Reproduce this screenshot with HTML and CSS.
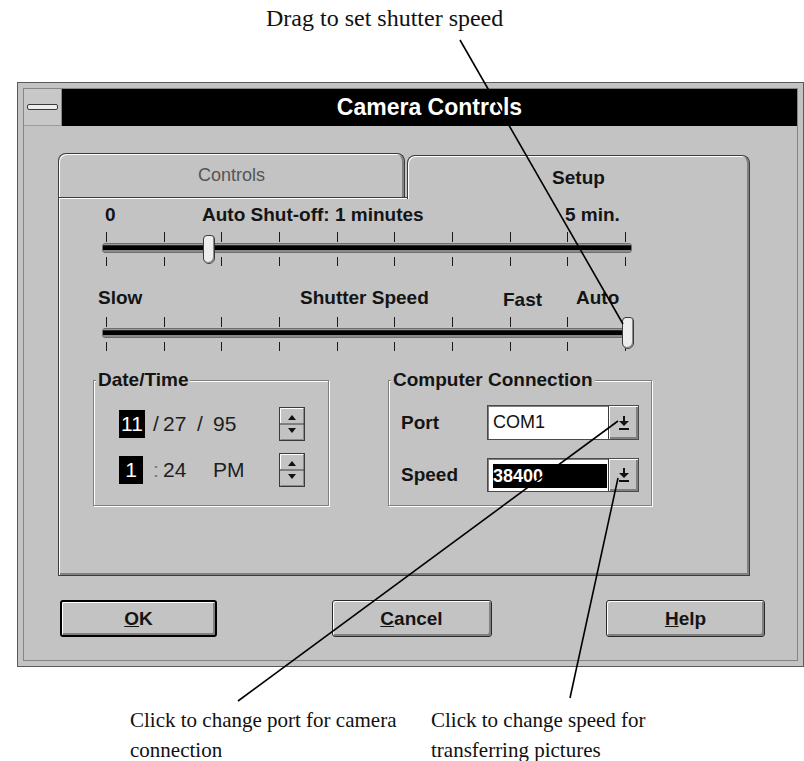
FILE: index.html
```html
<!DOCTYPE html>
<html>
<head>
<meta charset="utf-8">
<title>Camera Controls</title>
<link rel="stylesheet" href="styles.css">
</head>
<body>
<div class="page">
  <p class="caption caption-top">Drag to set shutter speed</p>

  <div class="window">
    <div class="frame">
      <div class="titlebar">
        <div class="sysmenu"><span class="sysbar"></span></div>
        <div class="title">Camera Controls</div>
      </div>
      <div class="client">
        <div class="tabs">
          <div class="tab tab-controls">Controls</div>
          <div class="tab tab-setup">Setup</div>
        </div>
        <div class="panel">
          <div class="labels row1">
            <span>0</span><span>Auto Shut-off: 1 minutes</span><span>5 min.</span>
          </div>
          <div class="slider s1">
            <div class="ticks"><i></i><i></i><i></i><i></i><i></i><i></i><i></i><i></i><i></i><i></i></div>
            <div class="track"></div>
            <div class="ticks bottom"><i></i><i></i><i></i><i></i><i></i><i></i><i></i><i></i><i></i><i></i></div>
            <div class="thumb" style="left:103px"></div>
          </div>

          <div class="labels row2">
            <span>Slow</span><span>Shutter Speed</span><span class="fast">Fast</span><span>Auto</span>
          </div>
          <div class="slider s2">
            <div class="ticks"><i></i><i></i><i></i><i></i><i></i><i></i><i></i><i></i><i></i><i></i></div>
            <div class="track"></div>
            <div class="ticks bottom"><i></i><i></i><i></i><i></i><i></i><i></i><i></i><i></i><i></i><i></i></div>
            <div class="thumb thumb-end" style="left:522px"></div>
          </div>

          <div class="groups">
            <fieldset class="group group-date">
              <legend>Date/Time</legend>
              <div class="dt">
                <span class="sel">11</span>
                <span class="sep">/</span>
                <span>27</span>
                <span class="sep mid">/</span>
                <span>95</span>
                <svg class="spin" width="26" height="34" viewBox="0 0 26 34">
                  <rect x="0.5" y="0.5" width="25" height="33" fill="#c3c3c3" stroke="#3a3a3a"/>
                  <path d="M1.5 16V1.5H24" fill="none" stroke="#fff"/>
                  <path d="M1.5 32.5H24.5V1.5" fill="none" stroke="#8a8a8a"/>
                  <line x1="1" y1="17" x2="25" y2="17" stroke="#3a3a3a"/>
                  <path d="M9 13H17L13 8Z" fill="#111"/>
                  <path d="M9 21H17L13 26Z" fill="#111"/>
                </svg>

                <span class="sel narrow">1</span>
                <span class="sep colon">:</span>
                <span>24</span>
                <span></span>
                <span>PM</span>
                <svg class="spin" width="26" height="34" viewBox="0 0 26 34">
                  <rect x="0.5" y="0.5" width="25" height="33" fill="#c3c3c3" stroke="#3a3a3a"/>
                  <path d="M1.5 16V1.5H24" fill="none" stroke="#fff"/>
                  <path d="M1.5 32.5H24.5V1.5" fill="none" stroke="#8a8a8a"/>
                  <line x1="1" y1="17" x2="25" y2="17" stroke="#3a3a3a"/>
                  <path d="M9 13H17L13 8Z" fill="#111"/>
                  <path d="M9 21H17L13 26Z" fill="#111"/>
                </svg>
              </div>
            </fieldset>

            <fieldset class="group group-conn">
              <legend>Computer Connection</legend>
              <div class="cc">
                <span class="cc-label">Port</span>
                <div class="combo">
                  <span class="field">COM1</span>
                  <span class="drop">
                    <svg width="10" height="14" viewBox="0 0 10 14"><rect x="4" y="0" width="2" height="5" fill="#111"/><path d="M0 5H10L5 10Z" fill="#111"/><rect x="0" y="12" width="10" height="2" fill="#111"/></svg>
                  </span>
                </div>
                <span class="cc-label">Speed</span>
                <div class="combo">
                  <span class="field selected">38400</span>
                  <span class="drop">
                    <svg width="10" height="14" viewBox="0 0 10 14"><rect x="4" y="0" width="2" height="5" fill="#111"/><path d="M0 5H10L5 10Z" fill="#111"/><rect x="0" y="12" width="10" height="2" fill="#111"/></svg>
                  </span>
                </div>
              </div>
            </fieldset>
          </div>
        </div>

        <div class="buttons">
          <button class="push ok"><u>O</u>K</button>
          <button class="push cancel"><u>C</u>ancel</button>
          <button class="push help"><u>H</u>elp</button>
        </div>
      </div>
    </div>
  </div>

  <div class="captions">
    <p class="caption cap-port">Click to change port for camera<br>connection</p>
    <p class="caption cap-speed">Click to change speed for<br>transferring pictures</p>
  </div>

  <svg class="annotations" width="804" height="761" viewBox="0 0 804 761">
    <line x1="460" y1="40" x2="623" y2="324"/>
    <line x1="238" y1="701" x2="618" y2="421"/>
    <line x1="570" y1="698" x2="618" y2="478"/>
  </svg>
</div>
</body>
</html>
```

FILE: styles.css
```css
* { box-sizing: border-box; }

html, body {
  margin: 0;
  padding: 0;
  background: #fff;
}

body {
  width: 804px;
  height: 761px;
  overflow: hidden;
  font-family: "Liberation Sans", Arial, sans-serif;
  color: #141414;
}

.page {
  position: relative;
  width: 804px;
  height: 761px;
}

.caption {
  margin: 0;
  font-family: "Liberation Serif", "Times New Roman", serif;
  color: #111;
}

.caption-top {
  height: 82px;
  padding: 4px 0 0 266px;
  font-size: 24px;
  line-height: 28px;
}

/* ---------- window ---------- */
.window {
  margin-left: 17px;
  width: 787px;
  height: 585px;
  border: 1px solid #5a5a5a;
  background: #c3c3c3;
  padding: 5px;
}

.frame {
  height: 100%;
  border: 1px solid #858585;
  display: flex;
  flex-direction: column;
}

.titlebar {
  display: flex;
  height: 37px;
  flex: none;
}

.sysmenu {
  width: 38px;
  display: flex;
  align-items: center;
  justify-content: center;
  background: #c8c8c8;
  border-right: 1px solid #8a8a8a;
  border-bottom: 1px solid #9a9a9a;
}

.sysbar {
  width: 31px;
  height: 6px;
  border: 1px solid #3a3a3a;
  border-radius: 2px;
  background: #ececec;
}

.title {
  flex: 1;
  background: #000;
  color: #fff;
  font-weight: bold;
  font-size: 23px;
  display: flex;
  align-items: center;
  justify-content: center;
}

.client {
  flex: 1;
  padding-top: 27px;
}

/* ---------- tabs ---------- */
.tabs {
  display: flex;
  gap: 2px;
  width: 692px;
  height: 44px;
  margin-left: 34px;
  align-items: flex-end;
  position: relative;
  z-index: 1;
}

.tab {
  height: 44px;
  border: 1px solid #3c3c3c;
  border-bottom: none;
  border-radius: 8px 8px 0 0;
  background: #c3c3c3;
  box-shadow: inset 1px 1px 0 #fff, inset -2px 0 0 #808080;
  display: flex;
  align-items: center;
  justify-content: center;
}

.tab-controls {
  width: 347px;
  font-size: 18px;
  color: #555;
}

.tab-setup {
  width: 343px;
  margin-bottom: -2px;
  font-size: 19px;
  font-weight: bold;
  color: #141414;
}

.panel {
  width: 692px;
  height: 379px;
  margin-left: 34px;
  border: 1px solid #3c3c3c;
  box-shadow: inset 1px 1px 0 #fff, inset -2px -2px 0 #808080;
  padding-top: 6px;
}

/* ---------- sliders ---------- */
.labels {
  display: grid;
  font-size: 19px;
  font-weight: bold;
  line-height: 22px;
  white-space: nowrap;
}

.row1 {
  margin-left: 46px;
  grid-template-columns: 97px 363px auto;
}

.row2 {
  margin: 21px 0 0 39px;
  grid-template-columns: 202px 203px 73px auto;
}

.row2 .fast {
  position: relative;
  top: 2px;
}

.slider {
  position: relative;
  margin-left: 41px;
  width: 534px;
}

.s1 { margin-top: 6px; }
.s2 { margin-top: 8px; }

.ticks {
  display: flex;
  justify-content: space-between;
  padding: 0 8px 0 6px;
  height: 10px;
}

.ticks.bottom { height: 9px; }

.ticks i {
  display: block;
  width: 1px;
  background: #1a1a1a;
}

.track {
  height: 10px;
  margin: 1px 2px 4px;
  border: 1px solid #6e6e6e;
  border-radius: 3px;
  background: linear-gradient(#9a9a9a 0 1px, #2a2a2a 1px 2px, #000 2px 6px, #8a8a8a 6px);
}

.thumb {
  position: absolute;
  top: 3px;
  width: 12px;
  height: 29px;
  border: 1px solid #3a3a3a;
  border-radius: 4px 4px 6px 6px;
  background: #ededed;
  box-shadow: inset -1px -1px 0 #8a8a8a;
}

.thumb-end {
  top: 0;
  height: 32px;
}

/* ---------- group boxes ---------- */
.groups {
  display: flex;
  gap: 59px;
  margin: 18px 0 0 34px;
}

.group {
  margin: 0;
  padding: 0;
  min-width: 0;
  height: 137px;
  border: 1px solid #808080;
  box-shadow: inset 1px 1px 0 #fff, 1px 1px 0 #fff;
}

.group legend {
  font-size: 19px;
  font-weight: bold;
  line-height: 22px;
  padding: 0 2px;
  margin-left: 2px;
  background: #c3c3c3;
}

.group-date { width: 236px; }
.group-conn { width: 264px; }

.dt {
  padding: 16px 0 0 25px;
  display: grid;
  grid-template-columns: 34px 10px 24px 26px 66px 26px;
  grid-auto-rows: 34px;
  row-gap: 12px;
  align-items: center;
  font-size: 21px;
  color: #1e1e1e;
}

.sel {
  width: 26px;
  height: 28px;
  background: #000;
  color: #fff;
  display: flex;
  align-items: center;
  justify-content: center;
}

.sel.narrow { width: 24px; }

.sep.mid { text-align: center; }
.sep.colon { color: #777; }

.spin { display: block; }

.cc {
  padding: 14px 0 0 12px;
  display: grid;
  grid-template-columns: 86px 152px;
  grid-template-rows: 35px 34px;
  row-gap: 18px;
  align-items: center;
}

.cc-label {
  font-size: 19px;
  font-weight: bold;
}

.combo {
  height: 100%;
  display: flex;
  border: 1px solid #4a4a4a;
  box-shadow: inset 1px 1px 0 #808080;
  background: #fff;
}

.field {
  flex: 1;
  display: flex;
  align-items: center;
  padding-left: 5px;
  font-size: 18px;
  color: #111;
}

.field.selected {
  margin: 5px 1px 3px 5px;
  padding-left: 0;
  background: #000;
  color: #fff;
  font-weight: bold;
}

.drop {
  width: 30px;
  flex: none;
  display: flex;
  align-items: center;
  justify-content: center;
  background: #c3c3c3;
  border-left: 1px solid #3a3a3a;
  box-shadow: inset 1px 1px 0 #fff, inset -2px -2px 0 #808080;
}

/* ---------- buttons ---------- */
.buttons {
  display: flex;
  justify-content: space-between;
  padding: 0 32px 0 36px;
  margin-top: 24px;
}

.push {
  height: 37px;
  padding: 0;
  font-family: "Liberation Sans", Arial, sans-serif;
  font-size: 19px;
  font-weight: bold;
  color: #141414;
  background: #c3c3c3;
  border: 1px solid #2a2a2a;
  border-radius: 3px;
  box-shadow: inset 1px 1px 0 #fff, inset -2px -2px 0 #808080;
}

.ok { width: 157px; border: 2px solid #000; }
.cancel { width: 160px; }
.help { width: 159px; }

/* ---------- bottom captions ---------- */
.captions {
  display: flex;
  margin-top: 38px;
  padding-left: 130px;
}

.captions .caption {
  font-size: 21px;
  line-height: 30px;
}

.cap-port { width: 301px; }

.annotations {
  position: absolute;
  left: 0;
  top: 0;
  z-index: 2;
  pointer-events: none;
}

.annotations line {
  stroke: #000;
  stroke-width: 1.6;
}
```
